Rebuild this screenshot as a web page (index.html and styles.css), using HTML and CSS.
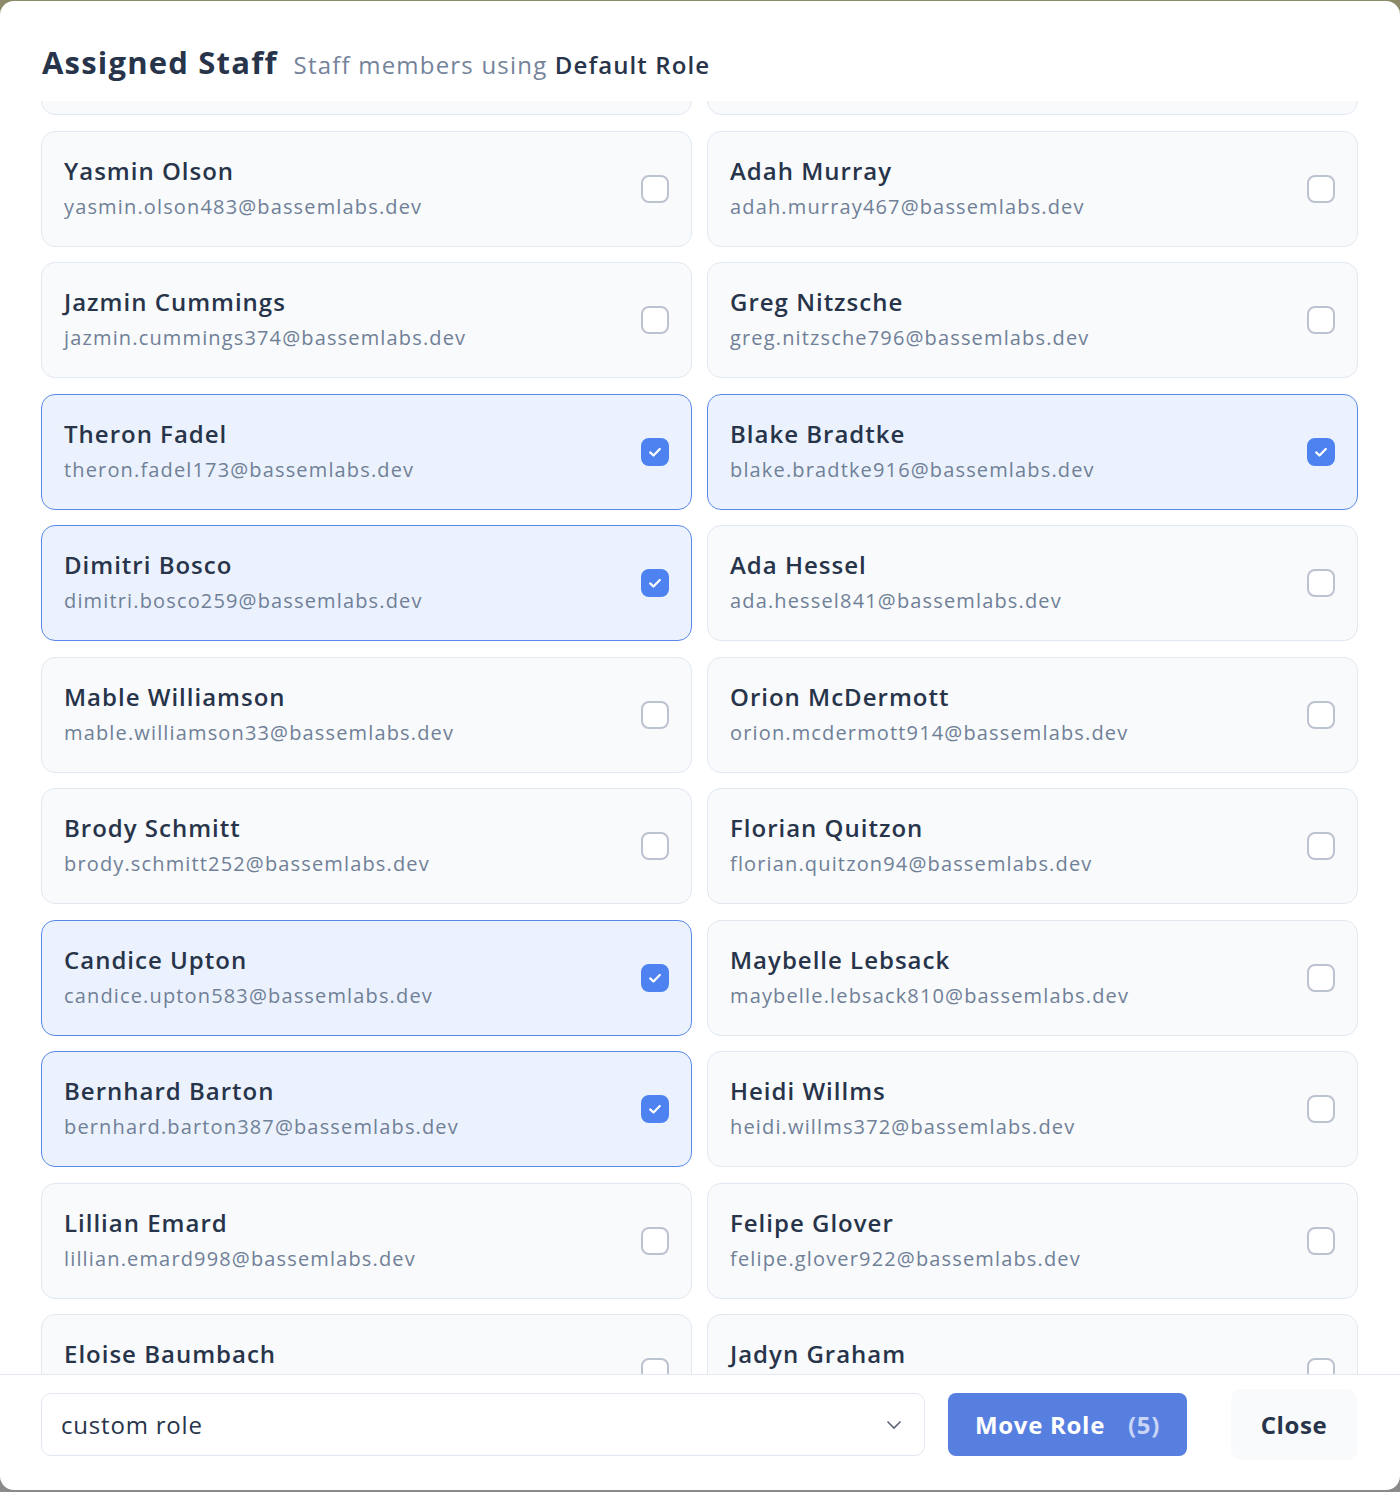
FILE: index.html
```html
<!DOCTYPE html>
<html lang="en">
<head>
    <meta charset="UTF-8">
    <meta name="viewport" content="width=device-width, initial-scale=1.0">
    <title>Assigned Staff</title>
    <link rel="stylesheet" href="styles.css">
</head>
<body>

<div class="modal">
    <div class="modal-header">
        <h2 class="modal-title">Assigned Staff</h2>
        <span class="modal-sub">Staff members using <b>Default Role</b></span>
    </div>

    <div class="staff-scroll">
        <div class="staff-grid">
            <label class="staff-card"><div class="staff-info"><div class="staff-name">Kaley Runolfsdottir</div><div class="staff-email">kaley.runolfsdottir120@bassemlabs.dev</div></div><span class="check"></span></label>
            <label class="staff-card"><div class="staff-info"><div class="staff-name">Emmet Hauck</div><div class="staff-email">emmet.hauck608@bassemlabs.dev</div></div><span class="check"></span></label>

            <label class="staff-card"><div class="staff-info"><div class="staff-name">Yasmin Olson</div><div class="staff-email">yasmin.olson483@bassemlabs.dev</div></div><span class="check"></span></label>
            <label class="staff-card"><div class="staff-info"><div class="staff-name">Adah Murray</div><div class="staff-email">adah.murray467@bassemlabs.dev</div></div><span class="check"></span></label>

            <label class="staff-card"><div class="staff-info"><div class="staff-name">Jazmin Cummings</div><div class="staff-email">jazmin.cummings374@bassemlabs.dev</div></div><span class="check"></span></label>
            <label class="staff-card"><div class="staff-info"><div class="staff-name">Greg Nitzsche</div><div class="staff-email">greg.nitzsche796@bassemlabs.dev</div></div><span class="check"></span></label>

            <label class="staff-card selected"><div class="staff-info"><div class="staff-name">Theron Fadel</div><div class="staff-email">theron.fadel173@bassemlabs.dev</div></div><span class="check"><svg viewBox="0 0 16 16"><path d="M4.5 8.3l2.4 2.3 4.6-4.8"/></svg></span></label>
            <label class="staff-card selected"><div class="staff-info"><div class="staff-name">Blake Bradtke</div><div class="staff-email">blake.bradtke916@bassemlabs.dev</div></div><span class="check"><svg viewBox="0 0 16 16"><path d="M4.5 8.3l2.4 2.3 4.6-4.8"/></svg></span></label>

            <label class="staff-card selected"><div class="staff-info"><div class="staff-name">Dimitri Bosco</div><div class="staff-email">dimitri.bosco259@bassemlabs.dev</div></div><span class="check"><svg viewBox="0 0 16 16"><path d="M4.5 8.3l2.4 2.3 4.6-4.8"/></svg></span></label>
            <label class="staff-card"><div class="staff-info"><div class="staff-name">Ada Hessel</div><div class="staff-email">ada.hessel841@bassemlabs.dev</div></div><span class="check"></span></label>

            <label class="staff-card"><div class="staff-info"><div class="staff-name">Mable Williamson</div><div class="staff-email">mable.williamson33@bassemlabs.dev</div></div><span class="check"></span></label>
            <label class="staff-card"><div class="staff-info"><div class="staff-name">Orion McDermott</div><div class="staff-email">orion.mcdermott914@bassemlabs.dev</div></div><span class="check"></span></label>

            <label class="staff-card"><div class="staff-info"><div class="staff-name">Brody Schmitt</div><div class="staff-email">brody.schmitt252@bassemlabs.dev</div></div><span class="check"></span></label>
            <label class="staff-card"><div class="staff-info"><div class="staff-name">Florian Quitzon</div><div class="staff-email">florian.quitzon94@bassemlabs.dev</div></div><span class="check"></span></label>

            <label class="staff-card selected"><div class="staff-info"><div class="staff-name">Candice Upton</div><div class="staff-email">candice.upton583@bassemlabs.dev</div></div><span class="check"><svg viewBox="0 0 16 16"><path d="M4.5 8.3l2.4 2.3 4.6-4.8"/></svg></span></label>
            <label class="staff-card"><div class="staff-info"><div class="staff-name">Maybelle Lebsack</div><div class="staff-email">maybelle.lebsack810@bassemlabs.dev</div></div><span class="check"></span></label>

            <label class="staff-card selected"><div class="staff-info"><div class="staff-name">Bernhard Barton</div><div class="staff-email">bernhard.barton387@bassemlabs.dev</div></div><span class="check"><svg viewBox="0 0 16 16"><path d="M4.5 8.3l2.4 2.3 4.6-4.8"/></svg></span></label>
            <label class="staff-card"><div class="staff-info"><div class="staff-name">Heidi Willms</div><div class="staff-email">heidi.willms372@bassemlabs.dev</div></div><span class="check"></span></label>

            <label class="staff-card"><div class="staff-info"><div class="staff-name">Lillian Emard</div><div class="staff-email">lillian.emard998@bassemlabs.dev</div></div><span class="check"></span></label>
            <label class="staff-card"><div class="staff-info"><div class="staff-name">Felipe Glover</div><div class="staff-email">felipe.glover922@bassemlabs.dev</div></div><span class="check"></span></label>

            <label class="staff-card"><div class="staff-info"><div class="staff-name">Eloise Baumbach</div><div class="staff-email">eloise.baumbach451@bassemlabs.dev</div></div><span class="check"></span></label>
            <label class="staff-card"><div class="staff-info"><div class="staff-name">Jadyn Graham</div><div class="staff-email">jadyn.graham705@bassemlabs.dev</div></div><span class="check"></span></label>
        </div>
    </div>

    <div class="modal-footer">
        <div class="role-select">
            <span>custom role</span>
            <svg class="chevron" viewBox="0 0 16 10"><path d="M1.5 1.5l6.5 6.5 6.5-6.5"/></svg>
        </div>
        <button class="btn-move">Move Role <span class="count">(5)</span></button>
        <button class="btn-close">Close</button>
    </div>
</div>

</body>
</html>
```

FILE: styles.css
```css
html, body {
    height: 100%;
}
body {
    margin: 0;
    font-family: "Open Sans", "Noto Sans", sans-serif;
    color: #27344a;
    /* backdrop behind the dialog */
    background: linear-gradient(#8b8a6a 0, #8b8a6a 50%, #8a8a8a 50%, #8a8a8a 100%);
}

.modal {
    box-sizing: border-box;
    height: 1489px;
    margin-top: 1px;
    background: #fff;
    border-radius: 14px;
    display: flex;
    flex-direction: column;
    overflow: hidden;
}

/* header */
.modal-header {
    height: 100px;
    flex-shrink: 0;
    box-sizing: border-box;
    padding: 40px 42px 0;
    display: flex;
    align-items: baseline;
    gap: 16px;
}
.modal-title {
    margin: 0;
    font-size: 31px;
    font-weight: 700;
    letter-spacing: 1.2px;
}
.modal-sub {
    font-size: 24px;
    color: #74839a;
    letter-spacing: 1.2px;
}
.modal-sub b {
    color: #27344a;
    font-weight: 600;
    letter-spacing: 1.1px;
}

/* staff list */
.staff-scroll {
    flex: 1;
    overflow: hidden;
    padding: 0 42px 0 41px;
}
.staff-grid {
    margin-top: -102px;
    display: grid;
    grid-template-columns: 1fr 1fr;
    grid-auto-rows: 116px;
    column-gap: 15px;
    row-gap: 15.5px;
}
.staff-card {
    box-sizing: border-box;
    display: flex;
    align-items: center;
    justify-content: space-between;
    padding: 0 22px 0 22px;
    background: #f8fafc;
    border: 1px solid #e2e8f0;
    border-radius: 14px;
    cursor: pointer;
}
.staff-card.selected {
    background: #ebf2fd;
    border-color: #5a88ea;
}
.staff-info {
    display: flex;
    flex-direction: column;
    gap: 9px;
    padding-bottom: 1px;
}
.staff-name {
    font-size: 24px;
    font-weight: 600;
    line-height: 28px;
    letter-spacing: 1px;
}
.staff-email {
    font-size: 20px;
    line-height: 26px;
    color: #708097;
    letter-spacing: 1.15px;
}

.check {
    box-sizing: border-box;
    width: 28px;
    height: 28px;
    flex-shrink: 0;
    border: 2px solid #bcc3d0;
    border-radius: 8px;
    background: #fff;
    display: flex;
    align-items: center;
    justify-content: center;
}
.selected .check {
    background: #4d82f0;
    border-color: #4d82f0;
}
.check svg {
    width: 22px;
    height: 22px;
    fill: none;
    stroke: #fff;
    stroke-width: 1.6;
    stroke-linecap: round;
    stroke-linejoin: round;
}

/* footer */
.modal-footer {
    flex-shrink: 0;
    height: 116px;
    box-sizing: border-box;
    border-top: 1px solid #e2e8f0;
    padding: 14px 42px 0 41px;
    display: flex;
    align-items: flex-start;
}
.role-select {
    box-sizing: border-box;
    width: 884px;
    height: 63px;
    margin-top: 4px;
    border: 1px solid #e2e8f0;
    border-radius: 10px;
    padding: 0 22px 0 19px;
    display: flex;
    align-items: center;
    justify-content: space-between;
    font-size: 24px;
    letter-spacing: 0.8px;
    color: #27344a;
}
.chevron {
    width: 16px;
    height: 10px;
    fill: none;
    stroke: #5b6577;
    stroke-width: 1.6;
}
.btn-move {
    width: 239px;
    height: 63px;
    margin: 4px 0 0 23px;
    border: none;
    border-radius: 8px;
    background: #567fe0;
    color: #fff;
    font-family: inherit;
    font-size: 24px;
    font-weight: 700;
    letter-spacing: 0.7px;
    cursor: pointer;
}
.btn-move .count {
    margin-left: 16px;
    color: #c8d5f6;
}
.btn-close {
    width: 126px;
    height: 71px;
    margin-left: 44px;
    border: none;
    border-radius: 10px;
    background: #f8fafc;
    color: #27344a;
    font-family: inherit;
    font-size: 24px;
    font-weight: 700;
    letter-spacing: 0.6px;
    cursor: pointer;
}
```
